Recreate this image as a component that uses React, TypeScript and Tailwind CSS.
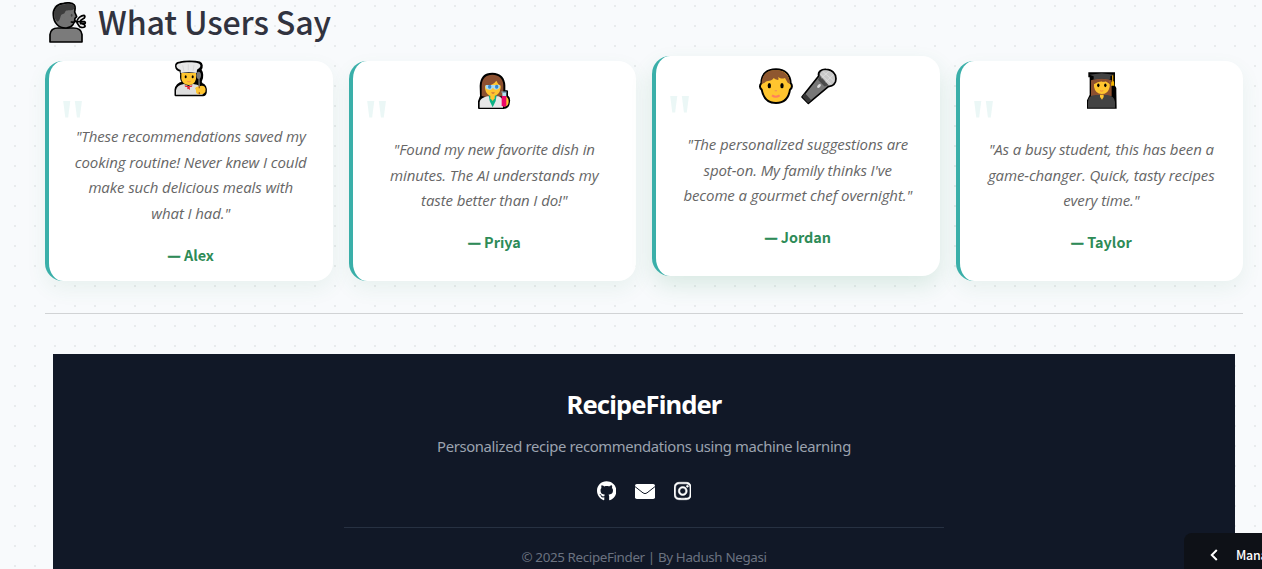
import type { ReactNode } from "react";
import { FaGithub, FaInstagram } from "react-icons/fa";

function SpeakingHead() {
  return (
    <svg className="h-[42px] w-[39px] shrink-0" viewBox="144 3 117 126" strokeLinejoin="round" strokeLinecap="round">
      <path d="M150 126V104q2-20 24-20h46q24 0 26 20v22z" fill="#7b7b7b" stroke="#000" strokeWidth="5" />
      <path d="M160 46c-2-18 10-34 28-35 12-5 30-2 34 3 6 6 3 14 2 22l6 14-5 5c0 14-8 28-26 29-24 1-38-16-39-38z" fill="#737373" stroke="#000" strokeWidth="5" />
      <path d="M163 46c-2-20 12-32 28-32 12-5 26-2 31 3 4 8-2 14-14 14-10 0-12 2-14 8-4 5-10 1-12 10-2 8-4 14-9 16-7-4-9-10-10-19z" fill="#3d3d3d" />
      <circle cx="189" cy="54" r="5" fill="#737373" />
      <ellipse cx="215" cy="46" rx="2.5" ry="4.5" fill="#454545" />
      <path d="M214 66q10 2 13-3M232 60q6-12 20-14 5 2 1 8l-11 7M230 65h24q4 3 0 6h-12M231 68l8 12q10 5 16 0 1-5-5-7l-9-4" stroke="#000" strokeWidth="5" fill="#eee" />
    </svg>
  );
}

function Cook() {
  return (
    <svg className="-mt-px h-[37px] w-[37px]" viewBox="36 15 111 111" strokeLinejoin="round">
      <path d="M46 121V104q3-18 22-22-7-9-5-24L61 48C45 44 42 24 59 22c14-4 46-4 60 0 8 3 9 14 3 22 6 8 7 23 2 32-3 5-1 8 2 10 12 4 13 15 12 25-1 6-4 10-9 10z" fill="#000" stroke="#000" strokeWidth="5" />
      <path d="M48 119v-13q3-17 24-19l13 6 14-6q28 3 29 20v12z" fill="#dedede" />
      <path d="M64 54h44v18q-4 18-22 18-19-1-22-18z" fill="#ffc52f" />
      <path d="M62 54v-9C46 40 45 26 61 25c13-4 42-4 53 0 11 3 9 14-3 19l-1 10q-23-5-48 0z" fill="#e8e8e8" />
      <path d="M68 31l4 18M85 28v18M102 30l-3 18" stroke="#d0d0d0" strokeWidth="2" />
      <ellipse cx="77" cy="65" rx="3" ry="4.5" /><ellipse cx="98" cy="65" rx="3" ry="4.5" />
      <path d="M82 79q5 3 10 0" stroke="#f28b45" strokeWidth="3" fill="none" />
      <path d="M74 91q12 5 23 0l-1 4-7 1 1 9-5-4-3 2v-7l-7-1z" fill="#e51c2b" />
      <ellipse cx="116" cy="61" rx="7" ry="11" fill="#777" />
      <path d="M117 70l1 45" stroke="#777" strokeWidth="4" />
      <path d="M105 100q5-7 12-5 9-6 17 0 6 8 2 16-5 8-15 7-12 1-13-8 2-3-3-10z" fill="#ffc52f" />
      <path d="M118 94v6M118 112v6" stroke="#9a5422" strokeWidth="4" />
    </svg>
  );
}

function Scientist() {
  return (
    <svg className="h-[38px] w-[39px]" viewBox="30 36 117 114" strokeLinejoin="round">
      <path d="M42 144v-20l6-16-1-30c1-25 14-37 35-37 23 0 35 15 36 36v17h8v14q8 5 6 17-1 19-17 19z" fill="#000" stroke="#000" strokeWidth="6" />
      <path d="M50 108V77c1-23 13-33 32-33s32 12 33 31v31l-13 5H63z" fill="#8c5030" />
      <path d="M44 143v-17q2-12 23-17h33q13 3 14 17v17z" fill="#e7e7e7" />
      <path d="M71 105h24l-3 18-9 19-9-19z" fill="#0bb286" />
      <path d="M76 101h14l-1 14-6 8-7-8z" fill="#ffc52f" />
      <path d="M60 77q23 1 34-15 4 11 13 15v7q-4 24-24 24-19 0-23-22z" fill="#ffc52f" />
      <path d="M62 75h42v8q-3 6-14 6l-6-6-6 6q-13 0-16-6z" fill="#a9dcf4" />
      <ellipse cx="74" cy="80" rx="5" ry="6" fill="#3388cf" /><ellipse cx="95" cy="80" rx="5" ry="6" fill="#3388cf" />
      <path d="M79 98q5 3 10 0" stroke="#f28b45" strokeWidth="3" />
      <path d="M119 108q13 4 12 18t-14 14z" fill="#ffc52f" />
      <path d="M112 97h12v13h-12z" fill="#b5dff2" />
      <path d="M110 108h14v28q-7 9-14 0z" fill="#ec0868" />
      <path d="M109 96h16" stroke="#7caecb" strokeWidth="3" />
    </svg>
  );
}

function FaceAndMicrophone() {
  return (
    <svg className="h-[38px] w-[80px]" viewBox="24 21 240 114" strokeLinejoin="round">
      <path d="M34 70C34 42 51 28 78 28s43 16 44 42c6 5 4 16-2 19-4 27-20 40-42 40S40 115 35 89c-6-4-7-14-1-19z" fill="#ffc52f" stroke="#000" strokeWidth="6" />
      <path d="M35 72C35 43 52 30 77 30s42 15 43 42l-7-4-8-14c-9 4-17 0-21-3q3 7 0 9-9-1-13-6c-7 11-19 6-27 14z" fill="#8f572f" />
      <ellipse cx="58" cy="77" rx="5" ry="8" /><ellipse cx="96" cy="77" rx="5" ry="8" />
      <path d="M74 92h7" stroke="#f49a51" strokeWidth="4" />
      <path d="M66 106q11 8 23 0" fill="none" stroke="#ff805d" strokeWidth="6" />
      <path d="M156 111l50-63c-3-14 8-21 22-20 18 0 30 13 30 28 0 16-11 22-23 24l-60 50z" fill="#777" stroke="#000" strokeWidth="5" />
      <path d="M157 110l17 19 10-8-19-21z" fill="#383838" />
      <path d="M209 49l-5 10 19 20 13-3z" fill="#4a4a4a" />
      <path d="M210 45c0-10 8-15 18-14 15 0 27 11 27 25 0 11-7 19-19 20z" fill="#c8c8c8" />
      <path d="M211 42l33 31M218 34l35 31M237 34l-23 20M250 44l-23 22" stroke="#e4e4e4" strokeWidth="2" />
      <ellipse cx="207" cy="78" rx="4" ry="7" transform="rotate(42 207 78)" fill="#ddd" />
    </svg>
  );
}

function Student() {
  return (
    <svg className="-mt-px h-[39px] w-[33px]" viewBox="404 63 99 117" strokeLinejoin="round">
      <path d="M414 67h80v40l4 7v9l1 53h-89v-25l8-17V82h-4z" fill="#000" />
      <path d="M422 139V91q32-13 62 0v48z" fill="#8c5030" />
      <path d="M413 173v-18q1-19 23-20h35q20 2 23 20v18z" fill="#424242" />
      <path d="M449 134h11v7l-5 8-6-8z" fill="#ffc52f" />
      <path d="M431 94h47v16q-4 22-24 22-19-1-23-22z" fill="#ffc52f" />
      <path d="M428 104l5-16h43l5 16-15-10q-9 3-12 0l-12 3z" fill="#8c5030" />
      <path d="M417 74l37-4 38 4-12 5v10q-27-5-50 0V79z" fill="#424242" />
      <ellipse cx="444" cy="106" rx="3.5" ry="5.5" /><ellipse cx="465" cy="106" rx="3.5" ry="5.5" />
      <path d="M449 122q5 3 10 0" stroke="#f28b45" strokeWidth="3" fill="none" />
      <path d="M487 76v22" stroke="#d99b0b" strokeWidth="4" /><path d="M483 95l8-1 1 13h-10z" fill="#f4b400" />
    </svg>
  );
}

function Envelope() {
  return (
    <svg className="h-[15px] w-5" viewBox="0 0 20 15">
      <rect width="20" height="15" rx="1.8" fill="currentColor" />
      <path d="M0 2.6l8 6.3q2 1.5 4 0l8-6.3" fill="none" stroke="#111827" strokeWidth="1" />
    </svg>
  );
}

type CardProps = { icon: ReactNode; lines: string[]; name: string; className: string };

function Testimonial({ icon, lines, name, className }: CardProps) {
  return (
    <article className={"relative flex h-[220px] flex-col items-center rounded-[18px] border-l-4 border-[#3aafa9] bg-white " + className}>
      <span className="absolute left-[8px] top-[48px] origin-left scale-x-[0.8] font-['Liberation_Serif',serif] text-[70px] font-bold leading-[30px] text-[#3aafa9]/10">"</span>
      <div className="flex h-[40px] items-start">{icon}</div>
      <p className="mt-[25px] text-center font-['Open_Sans',sans-serif] text-[15px] leading-[25.6px] italic tracking-[-0.1px] text-[#666]">
        {lines.map((line) => (
          <span key={line} className="block whitespace-nowrap">{line}</span>
        ))}
      </p>
      <p className="mt-[15.4px] text-[14.4px] font-bold leading-[25.6px] text-[#2e8b57]">
        <span className="[-webkit-text-stroke:0.7px_#2e8b57]">—</span> {name}
      </p>
    </article>
  );
}

export default function App() {
  return (
    <div className="relative h-[569px] w-[1262px] overflow-hidden bg-[#f8fafc] font-['Noto_Sans_CJK_SC',sans-serif]">
      <svg className="absolute inset-0 h-full w-full" aria-hidden="true">
        <defs>
          <pattern id="dots" width="20" height="20" patternUnits="userSpaceOnUse">
            <rect x="14" y="5" width="2" height="2" fill="#e8ebed" />
          </pattern>
        </defs>
        <rect width="100%" height="100%" fill="url(#dots)" />
      </svg>
      <main className="relative pl-[45px] pr-[19px]">
        <h2 className="flex h-[61px] items-start gap-[11px] pl-[3px]">
          <div className="pt-px"><SpeakingHead /></div>
          <span className="text-[32.2px] font-medium leading-[42px] tracking-[-0.15px] text-[#31333f]">What Users Say</span>
        </h2>
        <section className="grid grid-cols-4 gap-4">
          <Testimonial
            className="pt-0 shadow-[0_8px_20px_rgba(46,139,87,0.08)] [&>div]:h-[38px]"
            icon={<Cook />}
            lines={['"These recommendations saved my', "cooking routine! Never knew I could", "make such delicious meals with", 'what I had."']}
            name="Alex"
          />
          <Testimonial
            className="pt-[11px] shadow-[0_8px_20px_rgba(46,139,87,0.08)]"
            icon={<Scientist />}
            lines={['"Found my new favorite dish in', "minutes. The AI understands my", 'taste better than I do!"']}
            name="Priya"
          />
          <Testimonial
            className="-mt-[5px] pt-[11px] shadow-[0_10px_22px_rgba(46,139,87,0.14)]"
            icon={<FaceAndMicrophone />}
            lines={['"The personalized suggestions are', "spot-on. My family thinks I've", 'become a gourmet chef overnight."']}
            name="Jordan"
          />
          <Testimonial
            className="pt-[11px] shadow-[0_8px_20px_rgba(46,139,87,0.08)]"
            icon={<Student />}
            lines={['"As a busy student, this has been a', "game-changer. Quick, tasty recipes", 'every time."']}
            name="Taylor"
          />
        </section>
        <hr className="mt-8 border-t border-[#d1d3d5]" />
        <footer className="mx-2 mt-10 flex h-[260px] flex-col items-center bg-[#111827] font-['Noto_Sans',sans-serif]">
          <h3 className="mt-[31px] text-[25.6px] font-bold leading-10 tracking-[-0.9px] text-white">RecipeFinder</h3>
          <p className="mt-[9px] whitespace-nowrap text-[14.8px] leading-6 tracking-[-0.34px] text-[#9ca3af]">
            Personalized recipe recommendations using machine learning
          </p>
          <div className="mt-[23px] flex h-5 items-center gap-[19px] text-white">
            <FaGithub className="h-5 w-[19.4px]" />
            <Envelope />
            <FaInstagram className="h-5 w-[17.5px]" stroke="currentColor" strokeWidth="14" />
          </div>
          <div className="mt-[26px] flex w-[600px] justify-center border-t border-[#273142] pt-[18px]">
            <p className="whitespace-nowrap text-[13.4px] leading-[22px] tracking-[-0.37px] text-[#6b7280]">© 2025 RecipeFinder | By Hadush Negasi</p>
          </div>
        </footer>
      </main>
      <button className="absolute bottom-0 right-0 flex h-9 w-[78px] items-center overflow-hidden rounded-tl-lg bg-[#0e1117] pl-[26px] pt-[7px] text-white">
        <svg className="h-3 w-2 shrink-0" viewBox="0 0 8 12" fill="none" stroke="currentColor" strokeWidth="2">
          <path d="M6.8 1L1.8 6l5 5" />
        </svg>
        <span className="ml-[18px] whitespace-nowrap text-[12.4px] font-medium leading-5 tracking-[-0.2px]">Manage app</span>
      </button>
    </div>
  );
}
